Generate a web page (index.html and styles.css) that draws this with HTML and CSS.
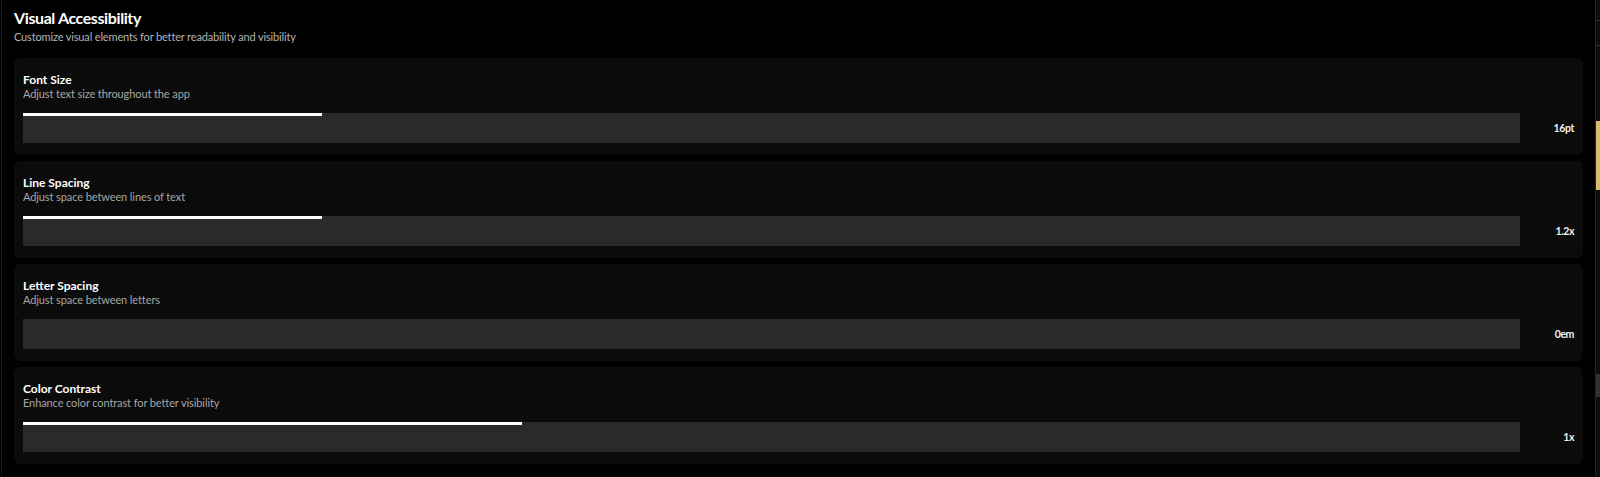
FILE: index.html
```html
<!DOCTYPE html>
<html lang="en">
<head>
<meta charset="utf-8">
<title>Visual Accessibility</title>
<link rel="stylesheet" href="styles.css">
</head>
<body>
<div class="app">
  <main class="main">
    <header class="header">
      <h1 class="title">Visual Accessibility</h1>
      <p class="subtitle">Customize visual elements for better readability and visibility</p>
    </header>
    <section class="cards">
      <div class="card">
        <div class="card-title">Font Size</div>
        <div class="card-desc">Adjust text size throughout the app</div>
        <div class="control">
          <div class="track"><div class="fill" style="width:20%"></div></div>
          <div class="value">16pt</div>
        </div>
      </div>
      <div class="card">
        <div class="card-title">Line Spacing</div>
        <div class="card-desc">Adjust space between lines of text</div>
        <div class="control">
          <div class="track"><div class="fill" style="width:20%"></div></div>
          <div class="value">1.2x</div>
        </div>
      </div>
      <div class="card">
        <div class="card-title">Letter Spacing</div>
        <div class="card-desc">Adjust space between letters</div>
        <div class="control">
          <div class="track"><div class="fill" style="width:0%"></div></div>
          <div class="value">0em</div>
        </div>
      </div>
      <div class="card">
        <div class="card-title">Color Contrast</div>
        <div class="card-desc">Enhance color contrast for better visibility</div>
        <div class="control">
          <div class="track"><div class="fill" style="width:33.33%"></div></div>
          <div class="value">1x</div>
        </div>
      </div>
    </section>
  </main>
  <aside class="rail">
    <div class="rail-line first"></div>
    <div class="rail-line second"></div>
    <div class="thumb gold"></div>
    <div class="thumb gray"></div>
  </aside>
</div>
</body>
</html>
```
FILE: styles.css
```css
html, body {
  margin: 0;
  padding: 0;
  background: #000;
}

body {
  font-family: Lato, "Open Sans", "Noto Sans", sans-serif;
  color: #fff;
}

.app {
  display: flex;
  height: 477px;
  overflow: hidden;
}

.main {
  flex: 1;
  margin-left: 1px;
  border-left: 1px solid #1c1c1c;
  padding: 8px 12px 0 12px;
  min-width: 0;
}

.header {
  margin-bottom: 13px;
}

.title {
  margin: 0;
  font-size: 16px;
  line-height: 20px;
  font-weight: 700;
  letter-spacing: -0.4px;
  color: #fff;
}

.subtitle {
  margin: 1px 0 0 0;
  font-size: 11px;
  line-height: 16px;
  letter-spacing: -0.15px;
  color: #b4b4b4;
}

.cards {
  display: flex;
  flex-direction: column;
  gap: 6px;
}

.card {
  background: #0b0b0b;
  border-radius: 6px;
  height: 97px;
  box-sizing: border-box;
  padding: 14px 9px 12px 9px;
}

.card-title {
  font-size: 12px;
  line-height: 15px;
  font-weight: 700;
  color: #fff;
}

.card-desc {
  font-size: 11px;
  line-height: 13px;
  letter-spacing: -0.1px;
  color: #a6a6a6;
}

.control {
  display: flex;
  align-items: center;
  margin-top: 13px;
}

.track {
  flex: 1;
  height: 30px;
  background: #2a2a2a;
}

.fill {
  height: 3px;
  background: #fff;
}

.value {
  width: 54px;
  text-align: right;
  font-size: 10.5px;
  letter-spacing: -0.4px;
  font-weight: 700;
  color: #f2f2f2;
}

.rail {
  width: 4px;
  border-left: 1px solid #262626;
  background: #0d0d0d;
  display: flex;
  flex-direction: column;
}

.rail-line {
  height: 1px;
  background: #333;
}

.rail-line.first {
  margin-top: 20px;
}

.rail-line.second {
  margin-top: 24px;
}

.thumb {
  height: 69px;
}

.thumb.gold {
  margin-top: 75px;
  background: #d6bd6e;
}

.thumb.gray {
  margin-top: 184px;
  height: 23px;
  background: #303030;
}
```
